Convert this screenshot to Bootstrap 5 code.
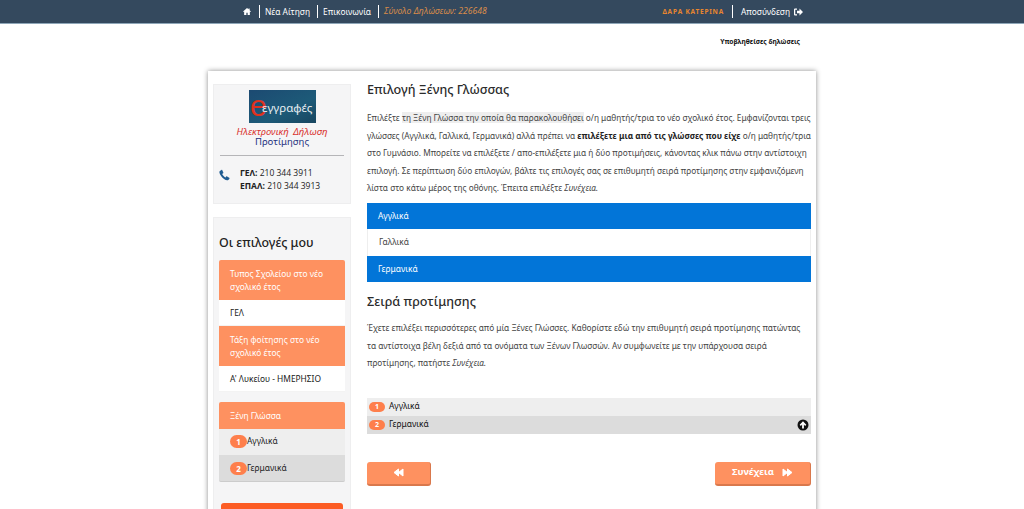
<!DOCTYPE html>
<html lang="el">
<head>
<meta charset="utf-8">
<title>Επιλογή Ξένης Γλώσσας</title>
<link href="https://cdn.jsdelivr.net/npm/bootstrap@5.3.0/dist/css/bootstrap.min.css" rel="stylesheet">
<style>
html,body{height:509px;overflow:hidden}
body{font-family:"Noto Sans","Open Sans",sans-serif;font-size:8.400px;color:#333;background:#fff}
.topbar{height:24px;background:#34495e;border-bottom:1px solid #8ea6b8;font-size:8.400px;color:#fff;padding-left:243px;padding-right:221px}
.topbar a{color:#fff;text-decoration:none}
.sep{padding-left:5px;margin-left:7px;border-left:1px solid #fff;line-height:13px}
.sep-out{padding-left:8px;margin-left:8px}
.tot{color:#d98c4a;font-style:italic;font-size:8.600px}
.usr{color:#e8862e;font-size:6.500px;font-weight:700;letter-spacing:.8px}
.subm{height:47px;font-size:6.700px;font-weight:700;color:#111;padding:13px 224px 0 0;text-align:right}
.shell{width:608px;margin-left:208px;height:470px;background:#fff;box-shadow:0 0 5px rgba(0,0,0,.45);padding:13px 5px 0}
.sidec{width:138px;flex:none;margin-right:16px}
.panel{background:#f5f5f6;border:1px solid #eeeeef}
.contact{height:120px;margin-bottom:13px;position:relative;text-align:center;padding-top:5px}
.contact::after{content:"";position:absolute;right:3px;bottom:-3px;width:70px;height:3px;background:linear-gradient(90deg,transparent,#999);filter:blur(1px);z-index:-1}
.logo{display:block;margin:0 auto}
.ttl1{font-size:9.500px;font-style:italic;color:#d9322e;line-height:11px;margin-top:3px;word-spacing:2px}
.ttl2{font-size:9.500px;color:#24317f;line-height:10px}
.rule{border-top:1px solid #b5b5b8;margin:8px 6px 0}
.ph{font-size:8.500px;color:#222;line-height:13px;text-align:left;padding:10px 0 0 26px;font-family:"Open Sans",sans-serif;position:relative}
.ph svg{position:absolute;left:5px;top:13px}
.choices{padding:16px 5px 0;height:300px}
.choices h5{font-size:12.400px;font-weight:500;color:#222;margin:0 0 8px;line-height:18px}
.hd{background:#fe9160;color:#fff;padding:6.500px 11px;line-height:13.500px;border-radius:2px 2px 0 0}
.val{background:#fff;padding:0 11px;line-height:26px;height:26px;color:#222;border-bottom:1px solid #f3f3f3}
.lang{height:26.500px;display:flex;align-items:center;padding-left:11px;color:#222}
.l1{background:#eee}
.l2{background:#dcdcdc;border-bottom:1px solid #ccc;border-radius:0 0 2px 2px;padding-top:1px}
.pill{background:#fe7f4c;color:#fff;font-weight:700;font-size:8px;border-radius:7px;display:inline-block;text-align:center}
.lang .pill{width:17px;height:13px;line-height:13px}
.orange{height:12px;background:#fc5c24;margin:21px 2px 0;border-radius:3px 3px 0 0}
.mainc{width:444px;flex:none}
.mainc h4{font-size:12.600px;font-weight:500;color:#2b2b2b;margin:0;line-height:18px}
.mainc p{font-size:8.270px;line-height:17.500px;margin:0;color:#444}
.mainc p b{color:#222}
.hl{background:#eee}
.sel{height:26.500px;line-height:26.500px;padding-left:11px;background:#0275d8;color:#fff}
.unsel{background:#fff;color:#444;border-left:1px solid #eee;border-right:1px solid #eee}
.ord{height:18px;display:flex;align-items:center;padding:0 2px;color:#111;justify-content:space-between}
.ord .pill{width:16px;height:10px;line-height:10px;margin-right:4px;font-size:7px}
.nbtn{background:#fe9160;color:#fff;height:24px;border:0;border-bottom:2px solid #d9784c;border-right:1px solid #d9784c;border-radius:3px;font-size:9.500px;font-weight:700;padding:0}
.nbtn svg{stroke:#fff;stroke-width:1;stroke-linejoin:round}
</style>
</head>
<body>
<nav class="topbar d-flex align-items-center justify-content-between">
  <div class="d-flex align-items-center">
    <svg width="8" height="7" viewBox="0 0 18 16" fill="#fff"><path d="M9 0 0 8l1 1.300 1.500-1.300V16h5v-5h3v5h5V8l1.500 1.300L18 8l-3-2.700V1h-2.500v2.100z"/></svg>
    <a class="sep" style="margin-left:8px" href="#">Νέα Αίτηση</a>
    <a class="sep" href="#">Επικοινωνία</a>
    <span class="sep tot">Σύνολο Δηλώσεων: 226648</span>
  </div>
  <div class="d-flex align-items-center">
    <span class="usr">ΔΑΡΑ ΚΑΤΕΡΙΝΑ</span>
    <a class="sep sep-out d-flex align-items-center gap-1" href="#">Αποσύνδεση
      <svg width="9" height="8" viewBox="0 0 18 16" fill="#fff"><path d="M0 3a2 2 0 0 1 2-2h4v2.500H2.500v9H6V15H2a2 2 0 0 1-2-2zM6 5.500h5V1l7 7-7 7v-4.500H6z"/></svg>
    </a>
  </div>
</nav>
<div class="subm">Υποβληθείσες δηλώσεις</div>
<div class="shell d-flex">
  <aside class="sidec">
    <div class="panel contact">
      <svg class="logo" width="67" height="33" viewBox="0 0 67 33">
        <defs><linearGradient id="g" x1="0" y1="0" x2="1" y2="1"><stop offset="0" stop-color="#1c4a72"/><stop offset=".6" stop-color="#1d5a78"/><stop offset="1" stop-color="#184660"/></linearGradient></defs>
        <rect width="67" height="33" fill="url(#g)"/>
        <text x="1" y="26" font-family="Liberation Sans" font-size="30" fill="#e0321e">e</text>
        <text x="13" y="22" font-family="Noto Sans" font-size="11.500" fill="#e8eef2">εγγραφές</text>
      </svg>
      <div class="ttl1">Ηλεκτρονική Δήλωση</div>
      <div class="ttl2">Προτίμησης</div>
      <div class="rule"></div>
      <div class="ph">
        <svg width="11" height="12" viewBox="0 0 16 16" fill="#1f5c92"><path d="M3.600.6 1.200 2.200C0 3.200.4 6 3 9.500c2.600 3.500 6 6.200 9 6.300 1.300 0 2.600-1 3.300-2.600.2-.5 0-1-.4-1.300L11.800 10c-.4-.3-1-.2-1.300.2l-1 1.300C8 11 5.300 8.300 4.600 6.500l1.400-1c.4-.3.500-.8.300-1.200L4.800 1c-.2-.5-.8-.7-1.200-.4z"/></svg>
        <div><b>ΓΕΛ:</b> 210 344 3911</div>
        <div><b>ΕΠΑΛ:</b> 210 344 3913</div>
      </div>
    </div>
    <div class="panel choices">
      <h5>Οι επιλογές μου</h5>
      <div class="hd">Τυπος Σχολείου στο νέο σχολικό έτος</div>
      <div class="val">ΓΕΛ</div>
      <div class="hd rounded-0">Τάξη φοίτησης στο νέο σχολικό έτος</div>
      <div class="val">Α' Λυκείου - ΗΜΕΡΗΣΙΟ</div>
      <div class="hd" style="margin-top:10px">Ξένη Γλώσσα</div>
      <div class="lang l1"><span class="pill">1</span>Αγγλικά</div>
      <div class="lang l2"><span class="pill">2</span>Γερμανικά</div>
      <div class="orange"></div>
    </div>
  </aside>
  <main class="mainc">
    <h4 style="margin-top:-3px">Επιλογή Ξένης Γλώσσας</h4>
    <p style="margin-top:10px">Επιλέξτε <span class="hl">τη Ξένη Γλώσσα την οποία θα παρακολουθήσει</span> ο/η μαθητής/τρια το νέο σχολικό έτος. Εμφανίζονται τρεις γλώσσες (Αγγλικά, Γαλλικά, Γερμανικά) αλλά πρέπει να <b>επιλέξετε μια από τις γλώσσες που είχε</b> ο/η μαθητής/τρια στο Γυμνάσιο. Μπορείτε να επιλέξετε / απο-επιλέξετε μια ή δύο προτιμήσεις, κάνοντας κλικ πάνω στην αντίστοιχη επιλογή. Σε περίπτωση δύο επιλογών, βάλτε τις επιλογές σας σε επιθυμητή σειρά προτίμησης στην εμφανιζόμενη λίστα στο κάτω μέρος της οθόνης. Έπειτα επιλέξτε <i>Συνέχεια.</i></p>
    <div style="margin-top:6px">
      <div class="sel">Αγγλικά</div>
      <div class="sel unsel">Γαλλικά</div>
      <div class="sel">Γερμανικά</div>
    </div>
    <h4 style="margin-top:11px">Σειρά προτίμησης</h4>
    <p class="mt-2">Έχετε επιλέξει περισσότερες από μία Ξένες Γλώσσες. Καθορίστε εδώ την επιθυμητή σειρά προτίμησης πατώντας τα αντίστοιχα βέλη δεξιά από τα ονόματα των Ξένων Γλωσσών. Αν συμφωνείτε με την υπάρχουσα σειρά προτίμησης, πατήστε <i>Συνέχεια.</i></p>
    <div style="margin-top:26px">
      <div class="ord" style="background:#eee"><span><span class="pill">1</span>Αγγλικά</span></div>
      <div class="ord" style="background:#dcdcdc"><span><span class="pill">2</span>Γερμανικά</span>
        <svg width="12" height="12" viewBox="0 0 12 12"><circle cx="6" cy="6" r="5.500" fill="#111"/><path d="M6 2.300 9.300 5.800 8.100 6.900 6.900 5.600V9.500H5.100V5.600L3.900 6.900 2.700 5.800z" fill="#fff"/></svg>
      </div>
    </div>
    <div class="d-flex justify-content-between" style="margin-top:28px">
      <button class="nbtn d-flex align-items-center justify-content-center" style="width:64px" aria-label="Πίσω">
        <svg width="11" height="9" viewBox="0 0 11 9" fill="#fff"><path d="M5.500 1v7L1 4.500zM10 1v7L5.500 4.500z"/></svg>
      </button>
      <button class="nbtn d-flex align-items-center justify-content-center gap-2" style="width:96px">Συνέχεια
        <svg width="11" height="9" viewBox="0 0 11 9" fill="#fff"><path d="M1 1l4.500 3.500L1 8zM5.500 1 10 4.500 5.500 8z"/></svg>
      </button>
    </div>
  </main>
</div>
</body>
</html>
